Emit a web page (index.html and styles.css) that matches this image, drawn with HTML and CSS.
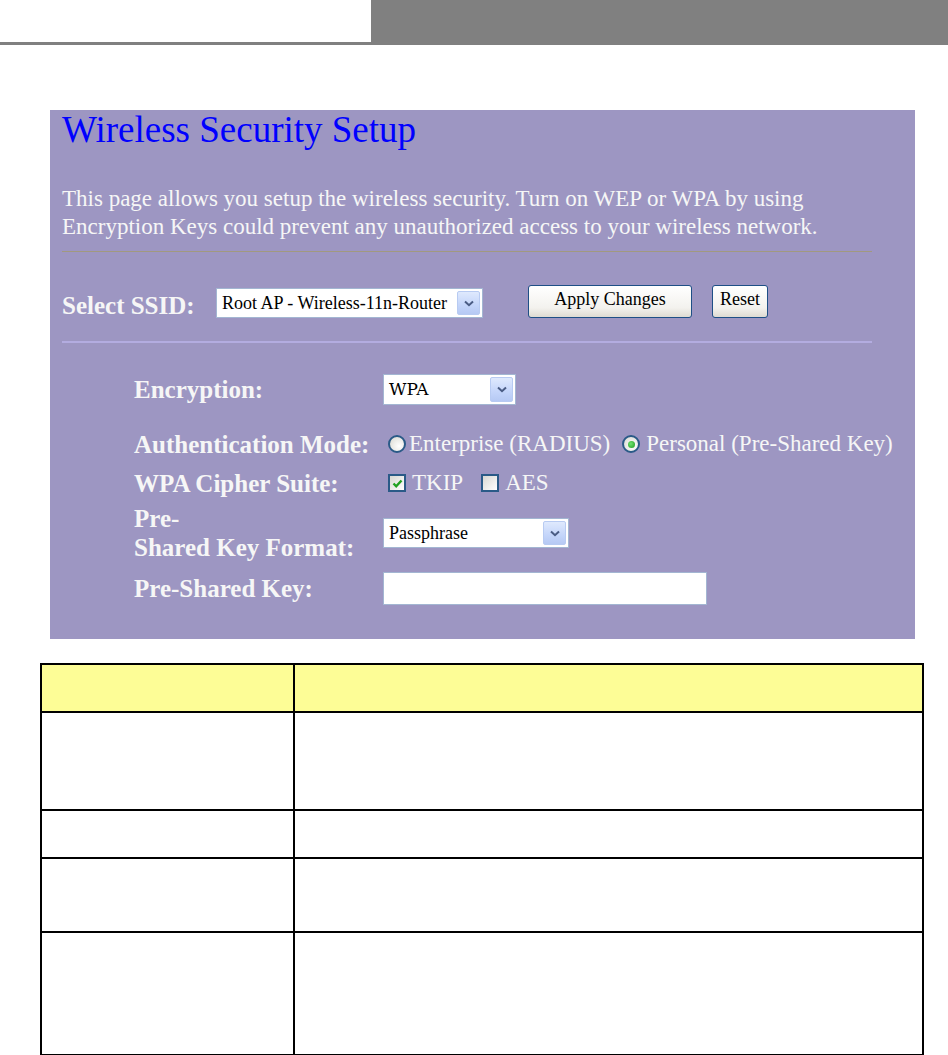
FILE: index.html
```html
<!DOCTYPE html>
<html lang="en">
<head>
<meta charset="utf-8">
<title>Wireless Security Setup</title>
<link rel="stylesheet" href="styles.css">
</head>
<body>
<div class="topbar">
  <div class="topbar-left"></div>
  <div class="topbar-right"></div>
</div>

<div class="panel">
  <h1 class="title">Wireless Security Setup</h1>
  <p class="desc">This page allows you setup the wireless security. Turn on WEP or WPA by using Encryption Keys could prevent any unauthorized access to your wireless network.</p>
  <hr class="rule rule-tan">

  <div class="ssid-row">
    <span class="ssid-label">Select SSID:</span>
    <div class="select select-ssid">
      <span class="select-text">Root AP - Wireless-11n-Router</span>
      <span class="select-btn"><svg width="10" height="7" viewBox="0 0 10 7"><path d="M1 1.5 L5 5.2 L9 1.5" fill="none" stroke="#4a5c84" stroke-width="2"/></svg></span>
    </div>
    <button class="btn btn-apply" type="button">Apply Changes</button>
    <button class="btn btn-reset" type="button">Reset</button>
  </div>

  <hr class="rule rule-lav">

  <div class="form">
    <div class="frow frow-enc">
      <span class="flabel">Encryption:</span>
      <div class="select select-enc">
        <span class="select-text select-text-wide">WPA</span>
        <span class="select-btn"><svg width="10" height="7" viewBox="0 0 10 7"><path d="M1 1.5 L5 5.2 L9 1.5" fill="none" stroke="#4a5c84" stroke-width="2"/></svg></span>
      </div>
    </div>

    <div class="frow frow-auth">
      <span class="flabel">Authentication Mode:</span>
      <div class="opts">
        <span class="radio"></span>
        <span class="opt-text">Enterprise (RADIUS)</span>
        <span class="radio radio-on"><span class="radio-dot"></span></span>
        <span class="opt-text">Personal (Pre-Shared Key)</span>
      </div>
    </div>

    <div class="frow frow-cipher">
      <span class="flabel">WPA Cipher Suite:</span>
      <div class="opts">
        <span class="check"><svg width="13" height="13" viewBox="0 0 13 13"><path d="M2.5 6.5 L5.2 9.3 L10.5 3.5" fill="none" stroke="#21a121" stroke-width="2.4"/></svg></span>
        <span class="opt-text opt-tkip">TKIP</span>
        <span class="check check-aes"></span>
        <span class="opt-text opt-aes">AES</span>
      </div>
    </div>

    <div class="frow frow-format">
      <span class="flabel">Pre-<br>Shared Key Format:</span>
      <div class="select select-format">
        <span class="select-text">Passphrase</span>
        <span class="select-btn"><svg width="10" height="7" viewBox="0 0 10 7"><path d="M1 1.5 L5 5.2 L9 1.5" fill="none" stroke="#4a5c84" stroke-width="2"/></svg></span>
      </div>
    </div>

    <div class="frow frow-key">
      <span class="flabel">Pre-Shared Key:</span>
      <div class="textbox"></div>
    </div>
  </div>
</div>

<table class="info">
  <tr class="info-head"><td class="col-a"></td><td></td></tr>
  <tr class="r1"><td class="col-a"></td><td></td></tr>
  <tr class="r2"><td class="col-a"></td><td></td></tr>
  <tr class="r3"><td class="col-a"></td><td></td></tr>
  <tr class="r4"><td class="col-a"></td><td></td></tr>
</table>
</body>
</html>
```

FILE: styles.css
```css
body {
  margin: 0;
  background: #ffffff;
  font-family: "Liberation Serif", "Times New Roman", serif;
}

.topbar {
  display: flex;
  height: 45px;
}
.topbar-left {
  width: 371px;
  height: 42px;
  border-bottom: 3px solid #808080;
}
.topbar-right {
  flex: 1;
  background: #808080;
}

.panel {
  margin: 65px 0 0 50px;
  width: 865px;
  height: 529px;
  box-sizing: border-box;
  padding-left: 12px;
  background: #9d96c2;
  color: #f6f6f6;
  overflow: hidden;
}

.title {
  margin: 0;
  font-family: "Liberation Serif", serif;
  font-weight: normal;
  font-size: 37px;
  line-height: 40px;
  color: #0000ff;
}

.desc {
  margin: 35px 0 0;
  font-size: 23px;
  line-height: 28px;
  max-width: 810px;
}

.rule {
  margin: 10px 0 0;
  width: 810px;
  height: 0;
  border: 0;
}
.rule-tan {
  border-top: 1px solid #a1997f;
}
.rule-lav {
  margin-top: 23px;
  border-top: 2px solid #b3ace0;
}

.ssid-row {
  display: flex;
  align-items: flex-end;
  margin-top: 33px;
  height: 33px;
}
.ssid-label {
  flex: none;
  width: 154px;
  font-weight: bold;
  font-size: 25px;
  line-height: 25px;
}

.select {
  display: flex;
  align-items: center;
  box-sizing: border-box;
  background: #ffffff;
  border: 1px solid #a3b6d2;
  padding: 2px 2px 2px 0;
  color: #000;
  flex: none;
}
.select-text {
  padding-left: 5px;
  font-size: 18px;
  white-space: nowrap;
}
.select-text-wide {
  font-family: "DejaVu Serif", serif;
  font-size: 17px;
}
.select-btn {
  margin-left: auto;
  flex: none;
  width: 21px;
  align-self: stretch;
  display: flex;
  align-items: center;
  justify-content: center;
  border: 1px solid #b8cbf2;
  border-radius: 2px;
  background: linear-gradient(#dfe9fd, #c4d5fa 60%, #b6c9f4);
}
.select-ssid {
  width: 267px;
  height: 30px;
}
.select-enc {
  width: 133px;
  height: 31px;
}
.select-format {
  width: 186px;
  height: 30px;
}

.btn {
  flex: none;
  box-sizing: border-box;
  height: 33px;
  padding: 0 0 4px;
  border: 1px solid #1e4f86;
  border-radius: 3px;
  background: linear-gradient(#ffffff, #f3f2ee 70%, #dedbd2);
  font-family: "Liberation Serif", serif;
  font-size: 18px;
  color: #000;
}
.btn-apply {
  width: 164px;
  margin-left: 45px;
}
.btn-reset {
  width: 56px;
  margin-left: 20px;
}

.form {
  margin: 26px 0 0 72px;
  display: flex;
  flex-direction: column;
}
.frow {
  display: flex;
  align-items: center;
  height: 40px;
}
.frow-auth {
  margin-top: 15px;
}
.frow-cipher {
  margin-top: 1px;
  height: 36px;
}
.frow-format {
  margin-top: 2px;
  height: 60px;
}
.frow-key {
  margin-top: 5px;
}
.flabel {
  flex: none;
  width: 249px;
  font-weight: bold;
  font-size: 25px;
  line-height: 29px;
}

.opts {
  display: flex;
  align-items: center;
  padding-left: 5px;
}
.opt-text {
  font-size: 23px;
  line-height: 28px;
  margin-left: 3px;
  white-space: nowrap;
}
.radio {
  flex: none;
  box-sizing: border-box;
  width: 18px;
  height: 18px;
  border-radius: 50%;
  border: 2px solid #2a5a87;
  background: radial-gradient(circle at 65% 65%, #ffffff, #d8d8d0);
  display: flex;
  align-items: center;
  justify-content: center;
}
.radio-on {
  margin-left: 12px;
  margin-right: 3px;
}
.radio-dot {
  width: 7px;
  height: 7px;
  border-radius: 50%;
  background: radial-gradient(circle at 40% 40%, #6fe36f, #1f9a1f);
}
.check {
  flex: none;
  box-sizing: border-box;
  width: 18px;
  height: 18px;
  border: 2px solid #2a5a87;
  background: linear-gradient(135deg, #d8d8d2, #ffffff);
  display: flex;
  align-items: center;
  justify-content: center;
}
.opt-tkip {
  margin-left: 6px;
}
.check-aes {
  margin-left: 18px;
}
.opt-aes {
  margin-left: 6px;
}

.textbox {
  flex: none;
  box-sizing: border-box;
  width: 324px;
  height: 33px;
  background: #ffffff;
  border: 1px solid #a3b6d2;
}

.info {
  margin: 24px 0 0 40px;
  width: 884px;
  border-collapse: collapse;
}
.info td {
  border: 2px solid #000;
  padding: 0;
}
.info .col-a {
  width: 251px;
}
.info-head td {
  background: #fdfd96;
  height: 46px;
}
.r1 td {
  height: 96px;
}
.r2 td {
  height: 46px;
}
.r3 td {
  height: 72px;
}
.r4 td {
  height: 121px;
}
```
